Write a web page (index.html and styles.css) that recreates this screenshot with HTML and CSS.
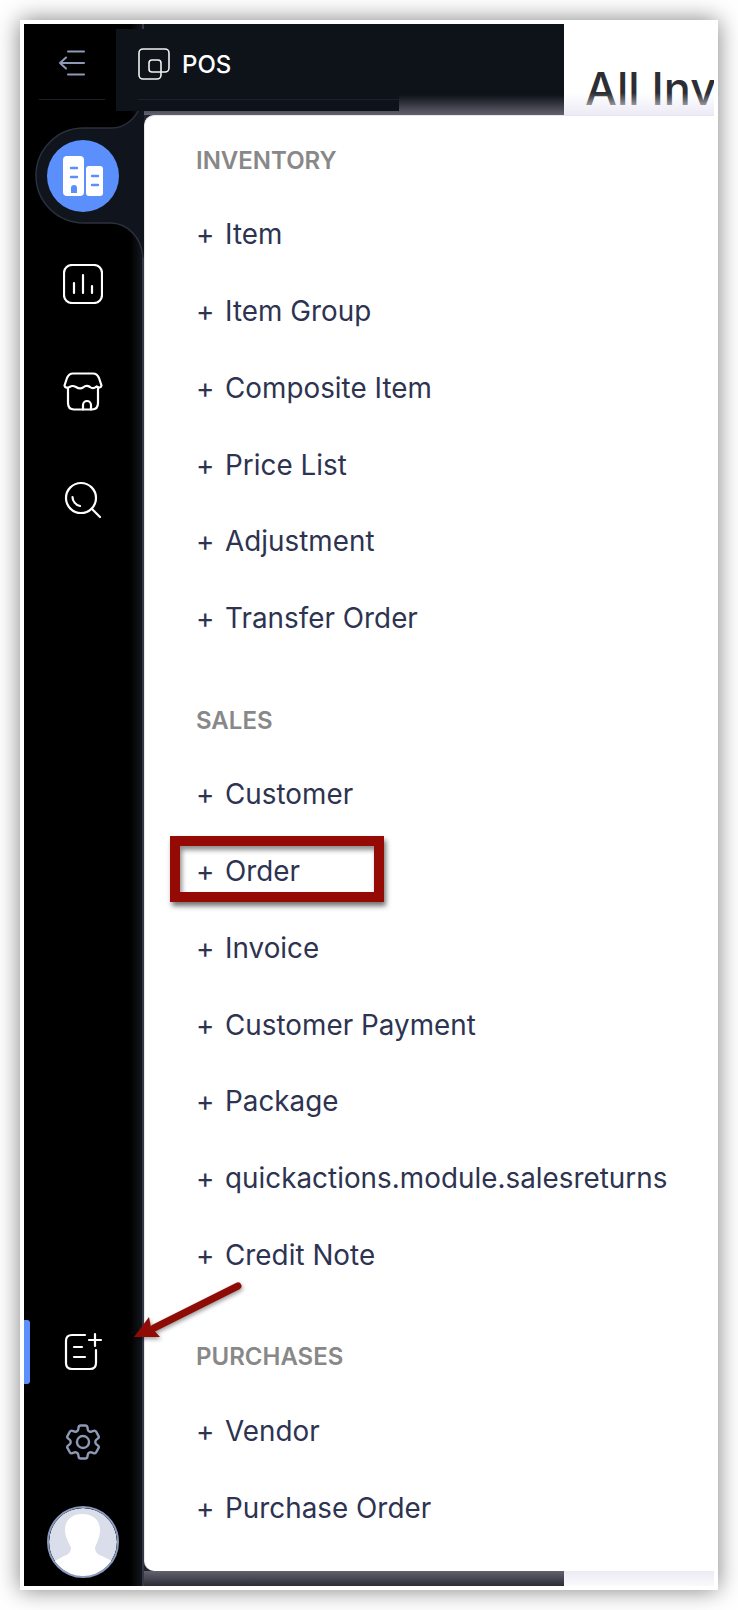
FILE: index.html
```html
<!DOCTYPE html>
<html lang="en">

<head>
    <meta charset="UTF-8">
    <meta name="viewport" content="width=device-width, initial-scale=1.0">
    <title>All Invoices</title>
    <link rel="stylesheet" href="styles.css">
</head>

<body>
    <div class="shot">
        <aside class="rail">
            <div class="rail-top">
                <svg class="icon" width="30" height="30" viewBox="0 0 30 30" fill="none" stroke="#8d99b5" stroke-width="2" stroke-linecap="round" stroke-linejoin="round">
                    <path d="M11 3.500h16M3 15h24M9 9.500 3 15l6 5.500M11 26.500h16" />
                </svg>
            </div>
            <ul class="rail-nav">
                <li class="rail-item active">
                    <svg class="notch" width="120" height="170" viewBox="0 0 120 170">
                        <path d="M116 8C110 20 100 28 88 28H59.500A47.500 47.500 0 0 0 59.500 123H86C104 123 118 138 119 158L120 158V8Z" fill="#10141c" />
                        <path d="M116 8C110 20 100 28 88 28H59.500A47.500 47.500 0 0 0 59.500 123H86C104 123 118 138 119 158" fill="none" stroke="#2b303d" stroke-width="1.500" />
                    </svg>
                    <span class="module-btn">
                        <svg width="40" height="40" viewBox="0 0 40 40">
                            <rect x="0" y="0" width="21" height="40" rx="4" fill="#fff" />
                            <rect x="23" y="10" width="17" height="30" rx="3" fill="#fff" />
                            <path d="M8 12h6M8 21h6M29 20h6M29 29h6" stroke="#5b8ffb" stroke-width="2.400" stroke-linecap="round" />
                            <path d="M8 37v-5a3 3 0 0 1 6 0v5z" fill="#5b8ffb" />
                        </svg>
                    </span>
                </li>
                <li class="rail-item">
                    <svg class="icon" width="40" height="40" viewBox="0 0 40 40" fill="none" stroke="#fff" stroke-width="2.200" stroke-linecap="round">
                        <rect x="1" y="1" width="38" height="38" rx="8" />
                        <path d="M11 19v10M20 11v18M29 22v7" />
                    </svg>
                </li>
                <li class="rail-item">
                    <svg class="icon" width="40" height="40" viewBox="0 0 40 40" fill="none" stroke="#fff" stroke-width="2.200" stroke-linejoin="round" stroke-linecap="round">
                        <path d="M10 1.500H30C33 1.500 35 3.500 36 6L38.500 13.500C38 16 35.500 16 33.500 14.500Q30 17.500 27 15Q23.500 12.500 20 15.500Q17 17.500 13 15Q9.500 13 6.500 15C4 16 2 16 1.500 13.500L4 6C5 3.500 7 1.500 10 1.500Z" />
                        <path d="M5 16.500V31C5 35 7 37.500 11 37.500H29C33 37.500 35 35 35 31V16.500" />
                        <path d="M20 37.500V33a4 4 0 0 1 8 0V37.500" />
                    </svg>
                </li>
                <li class="rail-item">
                    <svg class="icon" width="40" height="40" viewBox="0 0 40 40" fill="none" stroke="#fff" stroke-width="2.200" stroke-linecap="round">
                        <circle cx="18" cy="18" r="15" />
                        <path d="M29 29l8 8M9.500 17c0 4 3 8 7.500 9" />
                    </svg>
                </li>
            </ul>
            <div class="rail-bottom">
                <div class="rail-tool quick">
                    <svg class="icon" width="40" height="40" viewBox="0 0 40 40" fill="none" stroke="#fff" stroke-width="2.200" stroke-linecap="round">
                        <path d="M22 3H9C5 3 3 5 3 9V31C3 35 5 37 9 37H27C31 37 33 35 33 31V18" />
                        <path d="M11 15h8M11 25h11M32 2v12M26 8h12" />
                    </svg>
                </div>
                <div class="rail-tool">
                    <svg class="icon" width="44" height="44" viewBox="0 0 24 24" fill="none" stroke="#8d99b5" stroke-width="1.300" stroke-linecap="round" stroke-linejoin="round">
                        <circle cx="12" cy="12" r="3.300" />
                        <path d="M9.594 3.940c.09-.542.56-.94 1.110-.94h2.593c.55 0 1.020.398 1.110.94l.213 1.281c.063.374.313.686.645.870.074.040.147.083.220.127.324.196.720.257 1.075.124l1.217-.456a1.125 1.125 0 0 1 1.370.490l1.296 2.247a1.125 1.125 0 0 1-.260 1.431l-1.003.827c-.293.240-.438.613-.431.992a6.759 6.759 0 0 1 0 .255c-.007.378.138.750.430.990l1.005.828c.424.350.534.954.260 1.430l-1.298 2.247a1.125 1.125 0 0 1-1.369.491l-1.217-.456c-.355-.133-.750-.072-1.076.124a6.570 6.570 0 0 1-.220.128c-.331.183-.581.495-.644.869l-.213 1.280c-.09.543-.56.941-1.110.941h-2.594c-.55 0-1.020-.398-1.110-.940l-.213-1.281c-.062-.374-.312-.686-.644-.870a6.520 6.520 0 0 1-.220-.127c-.325-.196-.720-.257-1.076-.124l-1.217.456a1.125 1.125 0 0 1-1.369-.490l-1.297-2.247a1.125 1.125 0 0 1 .260-1.431l1.004-.827c.292-.240.437-.613.430-.992a6.932 6.932 0 0 1 0-.255c.007-.378-.138-.750-.430-.990l-1.004-.828a1.125 1.125 0 0 1-.260-1.430l1.297-2.247a1.125 1.125 0 0 1 1.370-.491l1.216.456c.356.133.751.072 1.076-.124.072-.044.146-.087.220-.128.332-.183.582-.495.644-.869l.214-1.281z" />
                    </svg>
                </div>
                <div class="avatar">
                    <svg width="68" height="68" viewBox="0 0 68 68">
                        <circle cx="34" cy="34" r="34" fill="#d9deea" />
                        <path d="M33 6C44 6 51 12 51 22C51 30 47 36 46 40C46 44 49 47 53 48L63 53L68 68H0L4 54L15 48C19 47 22 44 22 40C21 36 16 30 16 22C16 12 23 6 33 6Z" fill="#fff" />
                    </svg>
                </div>
            </div>
        </aside>

        <div class="content">
            <header class="topbar">
                <div class="darkbar">
                    <div class="module-title">
                        <div class="module-row">
                            <svg width="32" height="32" viewBox="0 0 32 32" fill="none" stroke="#f2f2f2" stroke-width="1.600" stroke-linejoin="round">
                                <path d="M5 31a4 4 0 0 1-4-4V5a4 4 0 0 1 4-4H27a4 4 0 0 1 4 4V20a4 4 0 0 1-4 4H14a3 3 0 0 1-3-3V15a3 3 0 0 1 3-3H20a3 3 0 0 1 3 3V27a4 4 0 0 1-4 4Z" />
                            </svg>
                            <span>POS</span>
                        </div>
                    </div>
                </div>
                <div class="page-title">All Invoices</div>
            </header>

            <main class="panel">
                <section class="group">
                    <h2>INVENTORY</h2>
                    <ul>
                        <li><i>+</i>Item</li>
                        <li><i>+</i>Item Group</li>
                        <li><i>+</i>Composite Item</li>
                        <li><i>+</i>Price List</li>
                        <li><i>+</i>Adjustment</li>
                        <li><i>+</i>Transfer Order</li>
                    </ul>
                </section>
                <section class="group">
                    <h2>SALES</h2>
                    <ul>
                        <li><i>+</i>Customer</li>
                        <li class="marked"><i>+</i>Order</li>
                        <li><i>+</i>Invoice</li>
                        <li><i>+</i>Customer Payment</li>
                        <li><i>+</i>Package</li>
                        <li><i>+</i>quickactions.module.salesreturns</li>
                        <li><i>+</i>Credit Note</li>
                    </ul>
                </section>
                <section class="group">
                    <h2>PURCHASES</h2>
                    <ul>
                        <li><i>+</i>Vendor</li>
                        <li><i>+</i>Purchase Order</li>
                    </ul>
                </section>
            </main>

            <footer class="bottombar">
                <div class="darkstrip"></div>
            </footer>
        </div>

        <!-- annotation arrow pointing at the quick create icon -->
        <svg class="arrow" width="120" height="70" viewBox="0 0 120 70">
            <path d="M104 6 20 48" stroke="#8e0b06" stroke-width="7" stroke-linecap="round" />
            <path d="M0 57 15 37 17 47 26 57Z" fill="#8e0b06" />
        </svg>
    </div>
</body>

</html>
```

FILE: styles.css
```css
* {
    box-sizing: border-box;
}

html,
body {
    margin: 0;
    height: 100%;
    overflow: hidden;
    background-color: #fff;
}

ul {
    list-style: none;
    margin: 0;
    padding: 0;
}

.shot {
    position: relative;
    display: flex;
    width: 698px;
    height: 1570px;
    margin: 20px 0 0 20px;
    border: 4px solid #fff;
    box-shadow: 0 0 22px rgba(0, 0, 0, 0.5);
    font-family: Inter, "Noto Sans", sans-serif;
}

/* left rail */
.rail {
    position: relative;
    display: flex;
    flex-direction: column;
    flex: 0 0 120px;
    height: 100%;
    border-right: 2px solid #333848;
    background-color: #000;
    background-image: linear-gradient(90deg, #000 90%, #15171e);
}

.rail-top {
    display: flex;
    align-items: center;
    justify-content: center;
    width: 66px;
    height: 76px;
    margin-left: 15px;
    border-bottom: 1px solid #1c1f28;
}

.rail-top .icon {
    margin-top: 2px;
}

.rail-nav {
    padding-top: 22px;
}

.rail-item {
    position: relative;
    display: flex;
    align-items: center;
    justify-content: center;
    width: 118px;
    height: 108px;
}

.notch {
    position: absolute;
    top: -22px;
    left: 0;
}

.module-btn {
    position: relative;
    display: flex;
    align-items: center;
    justify-content: center;
    width: 72px;
    height: 72px;
    border-radius: 50%;
    background-color: #5b8ffb;
}

.rail-bottom {
    margin-top: auto;
    padding-bottom: 8px;
}

.rail-tool {
    position: relative;
    display: flex;
    align-items: center;
    justify-content: center;
    height: 90px;
}

.quick::before {
    content: "";
    position: absolute;
    top: 13px;
    left: 0;
    width: 6px;
    height: 64px;
    border-radius: 0 3px 3px 0;
    background-color: #5b8ffb;
}

.avatar {
    display: flex;
    align-items: center;
    justify-content: center;
    width: 72px;
    height: 72px;
    margin: 19px 0 0 23px;
    border: 2px solid #8a9bc0;
    border-radius: 50%;
    overflow: hidden;
}

/* right side */
.content {
    display: flex;
    flex-direction: column;
    flex: 1;
    min-width: 0;
    height: 100%;
    background-color: #23252e;
}

.topbar {
    display: flex;
    flex: 0 0 90px;
}

.darkbar {
    position: relative;
    flex: 0 0 420px;
    background-image: linear-gradient(180deg, #0e1219 78%, #62626e);
}

.module-title {
    width: 283px;
    height: 82px;
    margin: 5px 0 0 -28px;
    padding-left: 22px;
    background-color: #0e1219;
}

.module-row {
    display: flex;
    align-items: center;
    gap: 12px;
    height: 71px;
    border-bottom: 1px solid #1d212b;
    color: #fff;
    font-size: 24px;
    font-weight: 500;
}

.page-title {
    position: relative;
    flex: 1;
    padding: 39px 0 0 21px;
    color: #2c2e33;
    font-size: 45px;
    font-weight: 500;
    line-height: 52px;
    white-space: nowrap;
    overflow: hidden;
    background-color: #fff;
}

.page-title::after {
    content: "";
    position: absolute;
    bottom: 0;
    left: 0;
    width: 100%;
    height: 22px;
    background-image: linear-gradient(180deg, rgba(236, 234, 244, 0), #eceaf4);
}

.panel {
    flex: 0 0 1456px;
    padding-top: 8px;
    border: 1px solid #e6e6f0;
    border-width: 1px 0 0 1px;
    border-radius: 10px 0 0 10px;
    background-color: #fff;
}

.group {
    padding-left: 51px;
    margin-bottom: 27.500px;
}

.group:last-child {
    margin-bottom: 0;
}

.group h2 {
    display: flex;
    align-items: center;
    height: 72px;
    margin: 0;
    color: #888;
    font-size: 24px;
    font-weight: 600;
}

.group li {
    position: relative;
    display: flex;
    align-items: center;
    height: 76.750px;
    color: #2d3350;
    font-size: 27.800px;
    letter-spacing: 0.03px;
    white-space: nowrap;
}

.group i {
    width: 29px;
    font-style: normal;
}

/* red highlight around the Order row */
.marked::after {
    content: "";
    position: absolute;
    top: 3px;
    left: -26px;
    box-sizing: border-box;
    width: 214px;
    height: 66px;
    border: 10px solid #950a04;
    box-shadow: 2px 4px 5px rgba(0, 0, 0, 0.55), inset 2px 4px 5px rgba(0, 0, 0, 0.45);
}

.bottombar {
    flex: 1;
    background-image: linear-gradient(180deg, #eceaf4, #fafafc);
}

.darkstrip {
    width: 420px;
    height: 100%;
    background-image: linear-gradient(180deg, #62626e, #2a2c36);
}

.arrow {
    position: absolute;
    top: 1256px;
    left: 110px;
    filter: drop-shadow(1px 2px 2px rgba(0, 0, 0, 0.4));
}
```
